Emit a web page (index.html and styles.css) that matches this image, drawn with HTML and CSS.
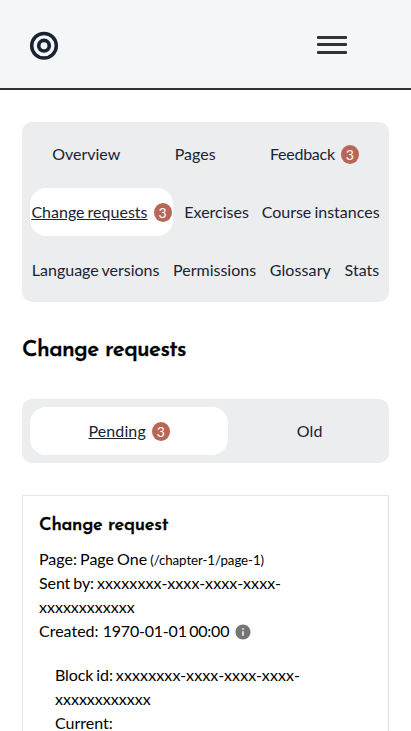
FILE: index.html
```html
<!DOCTYPE html>
<html lang="en">
<head>
<meta charset="utf-8">
<title>Change requests</title>
<link rel="stylesheet" href="styles.css">
</head>
<body>
<header class="header">
  <a class="logo" aria-label="Home"><svg width="30" height="30" viewBox="0 0 30 30" fill="none" stroke="#1a2333"><circle cx="15" cy="14.7" r="12.3" stroke-width="3.5"/><circle cx="15" cy="14.7" r="5.3" stroke-width="3.7"/></svg></a>
  <button class="menu" aria-label="Menu"><span class="bar"></span><span class="bar middle"></span><span class="bar"></span></button>
</header>
<main class="main">
  <nav class="tabs">
    <a class="tab"><span>Overview</span></a>
    <a class="tab"><span>Pages</span></a>
    <a class="tab"><span class="tight">Feedback</span><span class="badge">3</span></a>
    <a class="tab active"><span class="label words">Change requests</span><span class="badge">3</span></a>
    <a class="tab"><span>Exercises</span></a>
    <a class="tab"><span class="words">Course instances</span></a>
    <a class="tab"><span class="words">Language versions</span></a>
    <a class="tab"><span>Permissions</span></a>
    <a class="tab"><span class="loose">Glossary</span></a>
    <a class="tab"><span>Stats</span></a>
  </nav>
  <h1 class="title">Change requests</h1>
  <nav class="tabs">
    <a class="tab active"><span class="label loose">Pending</span><span class="badge">3</span></a>
    <a class="tab"><span class="loose">Old</span></a>
  </nav>
  <section class="card">
    <h2 class="card-title">Change request</h2>
    <div class="page"><span class="words">Page: Page One </span><span class="path">(/chapter-1/page-1)</span></div>
    <div><span class="field">Sent by: </span><span class="id">xxxxxxxx-xxxx-xxxx-xxxx-</span>xxxxxxxxxxxx</div>
    <div class="created"><span>Created: <span class="date">1970-01-01 00:00</span></span><svg class="info" width="18" height="18" viewBox="0 0 24 24" fill="#757575"><path d="M12 2C6.48 2 2 6.48 2 12s4.48 10 10 10 10-4.480 10-10S17.520 2 12 2zm1 15h-2v-6h2v6zm0-8h-2V7h2v2z"/></svg></div>
    <div class="block">
      <div><span class="field">Block id: </span><span class="id">xxxxxxxx-xxxx-xxxx-xxxx-</span>xxxxxxxxxxxx</div>
      <div>Current:</div>
    </div>
  </section>
</main>
</body>
</html>
```
FILE: styles.css
```css
* { box-sizing: border-box; }
html { overflow: hidden; }
body {
  margin: 0;
  height: 731px;
  overflow: hidden;
  background: #fff;
  color: #000;
  font: 16px/24px Lato, sans-serif;
}
.header {
  display: flex;
  align-items: center;
  justify-content: space-between;
  height: 90px;
  padding: 2px 64px 0 29px;
  background: #f5f6f7;
  border-bottom: 2px solid #333;
}
.logo { display: flex; margin-top: 1px; }
.menu {
  display: flex;
  flex-direction: column;
  width: 30px;
  height: 18px;
  padding: 0;
  border: 0;
  background: none;
  justify-content: space-between;
}
.bar { height: 3px; border-radius: 1px; background: #333; }
.middle { margin-bottom: 1px; }
.main { padding: 32px 22px 0; }
.tabs {
  display: flex;
  flex-wrap: wrap;
  gap: 10px;
  padding: 8px;
  border-radius: 10px;
  background: #ebedee;
}
.tab {
  display: flex;
  flex: 1 1 auto;
  align-items: center;
  justify-content: center;
  height: 48px;
  border-radius: 16px;
  color: #1a2333;
  white-space: nowrap;
}
.active { background: #fff; }
.label { text-decoration: underline; }
.words { word-spacing: -1px; }
.tight { letter-spacing: -0.25px; }
.loose { letter-spacing: 0.1px; }
.badge {
  width: 18px;
  height: 19px;
  margin-left: 6px;
  border-radius: 50%;
  background: #b86655;
  color: #fff;
  font-size: 14px;
  line-height: 19px;
  text-align: center;
}
.title {
  margin: 34px 0 33px;
  font: 600 22.5px/30px "Josefin Sans", Lato, sans-serif;
  letter-spacing: -0.65px;
  -webkit-text-stroke: 0.3px #000;
}
.card {
  height: 300px;
  margin-top: 32px;
  padding: 16px;
  border: 1px solid #e2e4e6;
}
.card-title {
  margin: 1px 0 8px;
  font: 600 18.3px/26px "Josefin Sans", Lato, sans-serif;
  letter-spacing: -0.3px;
  -webkit-text-stroke: 0.3px #000;
}
.page { height: 24px; }
.path { font-size: 13.333px; letter-spacing: -0.1px; }
.field { letter-spacing: -0.1px; word-spacing: -1px; }
.id { letter-spacing: 0.12px; }
.date { letter-spacing: -0.2px; word-spacing: -1.5px; }
.created { display: flex; align-items: center; }
.info { margin: 2px 0 0 5px; }
.block { padding: 20px 16px; }
```
